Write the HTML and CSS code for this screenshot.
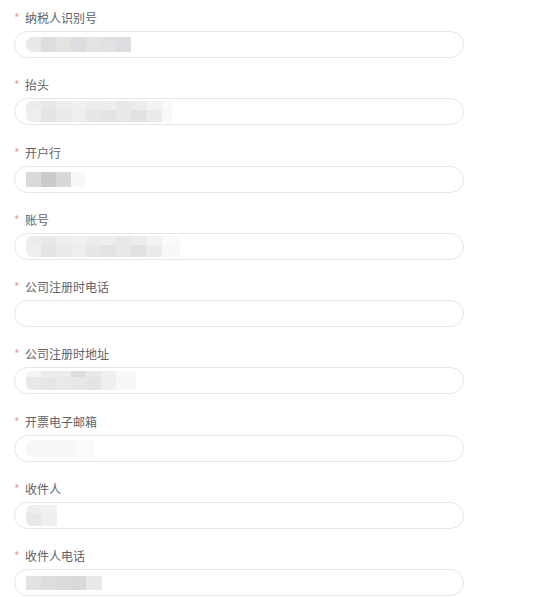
FILE: index.html
```html
<!DOCTYPE html>
<html lang="zh-CN">
<head>
<meta charset="utf-8">
<title>开票信息</title>
<link rel="stylesheet" href="styles.css">
</head>
<body>
<form class="form">
  <div class="item">
    <div class="label"><span class="req">*</span>纳税人识别号</div>
    <div class="input"><div class="mosaic"><div class="strip s-tax"></div></div></div>
  </div>
  <div class="item">
    <div class="label"><span class="req">*</span>抬头</div>
    <div class="input"><div class="mosaic"><div class="strip s-head-a"></div><div class="strip s-head-b"></div></div></div>
  </div>
  <div class="item">
    <div class="label"><span class="req">*</span>开户行</div>
    <div class="input"><div class="mosaic"><div class="strip s-bank"></div></div></div>
  </div>
  <div class="item">
    <div class="label"><span class="req">*</span>账号</div>
    <div class="input"><div class="mosaic"><div class="strip s-acc-a"></div><div class="strip s-acc-b"></div></div></div>
  </div>
  <div class="item">
    <div class="label"><span class="req">*</span>公司注册时电话</div>
    <div class="input"></div>
  </div>
  <div class="item">
    <div class="label"><span class="req">*</span>公司注册时地址</div>
    <div class="input"><div class="mosaic"><div class="strip s-addr-a"></div><div class="strip s-addr-b"></div></div></div>
  </div>
  <div class="item">
    <div class="label"><span class="req">*</span>开票电子邮箱</div>
    <div class="input"><div class="mosaic"><div class="strip s-mail"></div></div></div>
  </div>
  <div class="item">
    <div class="label"><span class="req">*</span>收件人</div>
    <div class="input"><div class="mosaic"><div class="strip s-name-a"></div><div class="strip s-name-b"></div></div></div>
  </div>
  <div class="item">
    <div class="label"><span class="req">*</span>收件人电话</div>
    <div class="input"><div class="mosaic"><div class="strip s-tel"></div></div></div>
  </div>
</form>
</body>
</html>
```
FILE: styles.css
```css
html, body {
  margin: 0;
  padding: 0;
  background: #ffffff;
}

.form {
  padding: 8px 0 0 14px;
  font-family: "Noto Sans CJK SC", "Noto Sans", sans-serif;
  font-size: 12px;
  color: #606266;
}

.item {
  margin-bottom: 17.25px;
}

.label {
  display: flex;
  align-items: center;
  height: 20px;
  line-height: 20px;
  margin-bottom: 3px;
}

.req {
  color: #f59a9a;
  width: 11px;
  font-size: 12px;
}

.input {
  box-sizing: border-box;
  width: 450px;
  height: 27px;
  border: 1px solid #e6e6e6;
  border-radius: 14px;
  padding-left: 11px;
  display: flex;
  align-items: center;
  overflow: hidden;
}

.mosaic {
  display: flex;
  flex-direction: column;
}

.strip {
  border-radius: 7px 0 0 7px;
}

.s-tax {
  width: 105px;
  height: 15px;
  background: linear-gradient(to right,
    #e9e9e9 0 15px, #dcdddf 15px 30px, #e3e4e2 30px 45px, #dcdde0 45px 60px,
    #e2e3e3 60px 75px, #e0e1e3 75px 90px, #dcdde0 90px 105px);
}

.s-head-a, .s-acc-a {
  width: 146px;
  height: 9px;
  border-radius: 6px 0 0 0;
  background: linear-gradient(to right,
    #ececec 0 15px, #e8e8ea 15px 30px, #eeeeee 30px 45px, #f0f0f0 45px 60px,
    #ececec 60px 75px, #ededee 75px 90px, #e8e8e8 90px 105px, #ececec 105px 120px,
    #f3f3f3 120px 136px, #fafafa 136px 146px);
}

.s-head-b, .s-acc-b {
  width: 146px;
  height: 12px;
  border-radius: 0 0 0 6px;
  background: linear-gradient(to right,
    #efefef 0 15px, #e3e4e6 15px 30px, #e9eaea 30px 45px, #eeeeee 45px 60px,
    #e7e7e7 60px 75px, #e3e3e3 75px 90px, #e8e8e8 90px 105px, #e2e2e2 105px 120px,
    #ebebeb 120px 136px, #f8f8f8 136px 146px);
}

.s-acc-a, .s-acc-b {
  width: 154px;
}

.s-bank {
  width: 60px;
  height: 15px;
  border-radius: 0;
  background: linear-gradient(to right,
    #dadada 0 15px, #cbcbcb 15px 30px, #d8d8dc 30px 45px, #f8f8f8 45px 60px);
}

.s-addr-a {
  width: 110px;
  height: 6px;
  border-radius: 6px 0 0 0;
  background: linear-gradient(to right,
    #f4f4f4 0 15px, #ececee 15px 30px, #ededed 30px 45px, #dcdde0 45px 60px,
    #e8e9eb 60px 75px, #f0f0f0 75px 90px, #f8f8f8 90px 110px);
}

.s-addr-b {
  width: 110px;
  height: 13px;
  border-radius: 0 0 0 6px;
  background: linear-gradient(to right,
    #e8e8e8 0 15px, #e6e6e8 15px 30px, #e8e9ea 30px 45px, #e6e7e9 45px 60px,
    #e3e4e6 60px 75px, #efefef 75px 90px, #f7f7f7 90px 110px);
}

.s-mail {
  width: 68px;
  height: 17px;
  background: linear-gradient(to right, #f7f7f7 0 50px, #fbfbfb 50px 68px);
}

.s-name-a {
  width: 31px;
  height: 8px;
  border-radius: 6px 0 0 0;
  background: linear-gradient(to right, #eeeeee 0 15px, #f2f2f3 15px 31px);
}

.s-name-b {
  width: 31px;
  height: 13px;
  border-radius: 0 0 0 6px;
  background: linear-gradient(to right, #e8e8e8 0 15px, #eeeeef 15px 31px);
}

.s-tel {
  width: 76px;
  height: 14px;
  border-radius: 0;
  background: linear-gradient(to right,
    #e2e2e2 0 15px, #dddddd 15px 30px, #dcdcdc 30px 45px, #d9d9d9 45px 60px,
    #e8e8ea 60px 76px);
}
```
